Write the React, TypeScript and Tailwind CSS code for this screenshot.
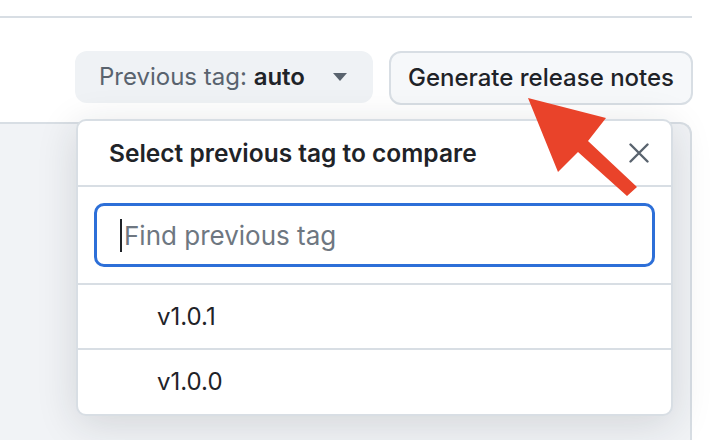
export default function App() {
  return (
    <div className="relative h-[440px] w-[726px] overflow-hidden bg-white font-['Inter',sans-serif] text-[#1f2328]">
      <div className="mr-[34px] h-[18px] border-b-2 border-[#d8dee4]" />

      <div className="mt-[33px] flex justify-end gap-[16px] pr-[33px]">
        <button className="flex h-[52px] w-[298px] items-center rounded-[12px] bg-[#eff2f5] pl-[24px] text-[24px]">
          <span className="text-[#59636e]">Previous tag:&nbsp;</span>
          <span className="font-semibold">auto</span>
          <svg className="ml-[28px]" width="14" height="8" viewBox="0 0 14 8">
            <polygon points="0,0 14,0 7,8" fill="#59636e" />
          </svg>
        </button>
        <button className="h-[54px] w-[304px] rounded-[12px] border-2 border-[#d8dee4] bg-[#f6f8fa] text-[24px] font-medium">
          Generate release notes
        </button>
      </div>

      <div className="mt-[17px] mr-[34px] h-[400px] rounded-tr-[12px] border-t-2 border-r-2 border-[#d8dee4] bg-[#f1f3f6]" />

      <div className="absolute top-[119px] left-[76px] w-[597px] overflow-hidden rounded-[10px] border-2 border-[#d8dee4] bg-white shadow-[0_8px_40px_rgba(31,35,40,0.14)]">
        <div className="flex h-[66px] items-center justify-between border-b-2 border-[#d8dee4] pr-[22px] pl-[31px]">
          <span className="text-[24.5px] font-semibold">Select previous tag to compare</span>
          <svg width="20" height="20" viewBox="0 0 20 20">
            <path d="M1.5 1.5 18.5 18.5M18.5 1.5 1.5 18.5" stroke="#59636e" strokeWidth="2.4" strokeLinecap="round" />
          </svg>
        </div>
        <div className="border-b-2 border-[#d8dee4] p-[16px]">
          <div className="flex h-[64px] items-center rounded-[10px] border-[3px] border-[#2d6fd8] pl-[23px] text-[26px] text-[#6e7781]">
            <span className="mr-[2px] h-[33px] w-[2px] bg-[#1f2328]" />
            Find previous tag
          </div>
        </div>
        <div className="flex h-[65px] items-center border-b-2 border-[#d8dee4] pl-[79px] text-[24px]">v1.0.1</div>
        <div className="flex h-[64px] items-center pl-[79px] text-[24px]">v1.0.0</div>
      </div>

      <svg className="absolute top-0 left-0" width="726" height="440" viewBox="0 0 726 440">
        <polygon points="528,98 606,118 588,141 637,187 627,196 578,152 558,172" fill="#e9432a" />
      </svg>
    </div>
  );
}
